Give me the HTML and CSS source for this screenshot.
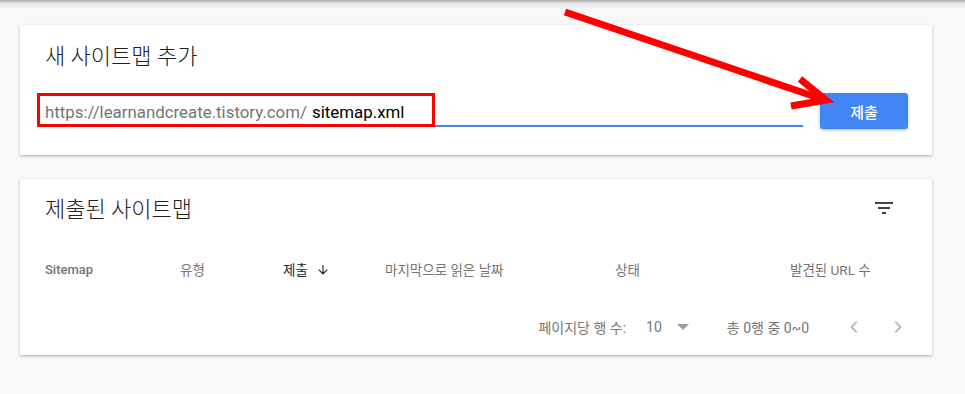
FILE: index.html
```html
<!DOCTYPE html>
<html lang="ko">
<head>
    <meta charset="UTF-8">
    <meta name="viewport" content="width=device-width, initial-scale=1.0">
    <title>Sitemaps</title>
    <link rel="stylesheet" href="styles.css">
</head>
<body>
    <div class="topbar"></div>

    <div class="page">
        <!-- Add sitemap card -->
        <div class="card add-card">
            <h2 class="card-title">새 사이트맵 추가</h2>
            <div class="add-row">
                <div class="field">
                    <span class="prefix">https://learnandcreate.tistory.com/</span>
                    <span class="value">sitemap.xml</span>
                </div>
                <button class="btn">제출</button>
            </div>
            <div class="highlight"></div>
        </div>

        <!-- Submitted sitemaps card -->
        <div class="card list-card">
            <div class="list-head">
                <h2 class="card-title">제출된 사이트맵</h2>
                <svg class="filter-icon" width="24" height="24" viewBox="0 0 24 24">
                    <path d="M3 6h18v2H3zM6 11h12v2H6zM10 16h4v2h-4z" fill="#424242"/>
                </svg>
            </div>
            <div class="cols">
                <span class="col-sitemap">Sitemap</span>
                <span>유형</span>
                <span class="col-sorted">제출
                    <svg width="14" height="14" viewBox="0 0 24 24"><path d="M20 12l-1.41-1.41L13 16.17V4h-2v12.17l-5.58-5.59L4 12l8 8 8-8z" fill="#212121"/></svg>
                </span>
                <span>마지막으로 읽은 날짜</span>
                <span>상태</span>
                <span>발견된 URL 수</span>
            </div>
            <div class="pager">
                <span>페이지당 행 수:</span>
                <span class="rows-num">10</span>
                <span class="caret"></span>
                <span class="range">총 0행 중 0~0</span>
                <svg class="chev" width="24" height="24" viewBox="0 0 24 24"><path d="M15.41 7.41L14 6l-6 6 6 6 1.41-1.41L10.83 12z" fill="#bdbdbd"/></svg>
                <svg class="chev" width="24" height="24" viewBox="0 0 24 24"><path d="M10 6L8.59 7.41 13.17 12l-4.58 4.59L10 18l6-6z" fill="#bdbdbd"/></svg>
            </div>
        </div>
    </div>

    <!-- annotation arrow -->
    <svg class="arrow" width="965" height="394" viewBox="0 0 965 394">
        <line x1="565" y1="12" x2="822" y2="99" stroke="#ff0000" stroke-width="7"/>
        <polyline points="800,79 826,100 791,106" fill="none" stroke="#ff0000" stroke-width="7" stroke-linejoin="miter"/>
    </svg>
</body>
</html>
```

FILE: styles.css
```css
body {
    margin: 0;
    font-family: Roboto, "Noto Sans CJK KR", sans-serif;
    background-color: #f8f8f8;
    color: #212121;
    position: relative;
    height: 394px;
    overflow: hidden;
}
.topbar {
    height: 9px;
    background: linear-gradient(#a9a9a9, #e4e4e4 35%, #f8f8f8);
}
.page {
    padding: 16px 0 0 20px;
    width: 912px;
}
.card {
    position: relative;
    background: #fff;
    border-radius: 2px;
    box-shadow: 0 1px 3px rgba(0, 0, 0, 0.3);
    box-sizing: border-box;
}
.card-title {
    margin: 0;
    font-size: 22px;
    font-weight: 300;
    line-height: 30px;
    color: #212121;
}

/* add card */
.add-card {
    height: 130px;
    padding: 17px 24px 0 25px;
}
.add-row {
    display: flex;
    align-items: flex-start;
    gap: 17px;
    margin-top: 21px;
}
.field {
    flex: 1;
    height: 34px;
    box-sizing: border-box;
    padding-top: 6px;
    line-height: 26px;
    font-size: 16.85px;
    border-bottom: 2px solid #4285f4;
    white-space: nowrap;
}
.prefix {
    color: #757575;
}
.value {
    color: #000;
    margin-left: 1px;
}
.btn {
    width: 88px;
    height: 36px;
    border: none;
    border-radius: 3px;
    background-color: #4285f4;
    color: #fff;
    font-family: inherit;
    font-size: 15px;
    font-weight: 500;
    box-shadow: 0 1px 3px rgba(0, 0, 0, 0.3);
    cursor: pointer;
}
.highlight {
    position: absolute;
    left: 17px;
    top: 68px;
    width: 398px;
    height: 34px;
    box-sizing: border-box;
    border: 3px solid #ff0000;
}

/* list card */
.list-card {
    margin-top: 24px;
    height: 176px;
    padding: 16px 0 0 25px;
}
.list-head {
    display: flex;
    justify-content: space-between;
    align-items: center;
    padding-right: 36px;
}
.filter-icon {
    margin-top: -5px;
}
.cols {
    display: grid;
    grid-template-columns: 135px 103px 102px 230px 175px auto;
    margin-top: 35px;
    line-height: 20px;
    font-size: 13.5px;
    color: #757575;
}
.col-sitemap {
    font-size: 13px;
    font-weight: 500;
}
.col-sorted {
    color: #212121;
    display: flex;
    align-items: center;
    gap: 8px;
}
.pager {
    display: flex;
    justify-content: flex-end;
    align-items: center;
    height: 24px;
    margin-top: 35px;
    padding-right: 22px;
    font-size: 14px;
    color: #757575;
}
.rows-num {
    margin-left: 20px;
    font-size: 14px;
}
.caret {
    width: 0;
    height: 0;
    margin-left: 15px;
    border-left: 6px solid transparent;
    border-right: 6px solid transparent;
    border-top: 6px solid #9e9e9e;
}
.range {
    margin-left: 38px;
    margin-right: 33px;
}
.chev {
    margin-left: 20px;
}
.chev:first-of-type {
    margin-left: 0;
}

.arrow {
    position: absolute;
    left: 0;
    top: 0;
    pointer-events: none;
}
```
